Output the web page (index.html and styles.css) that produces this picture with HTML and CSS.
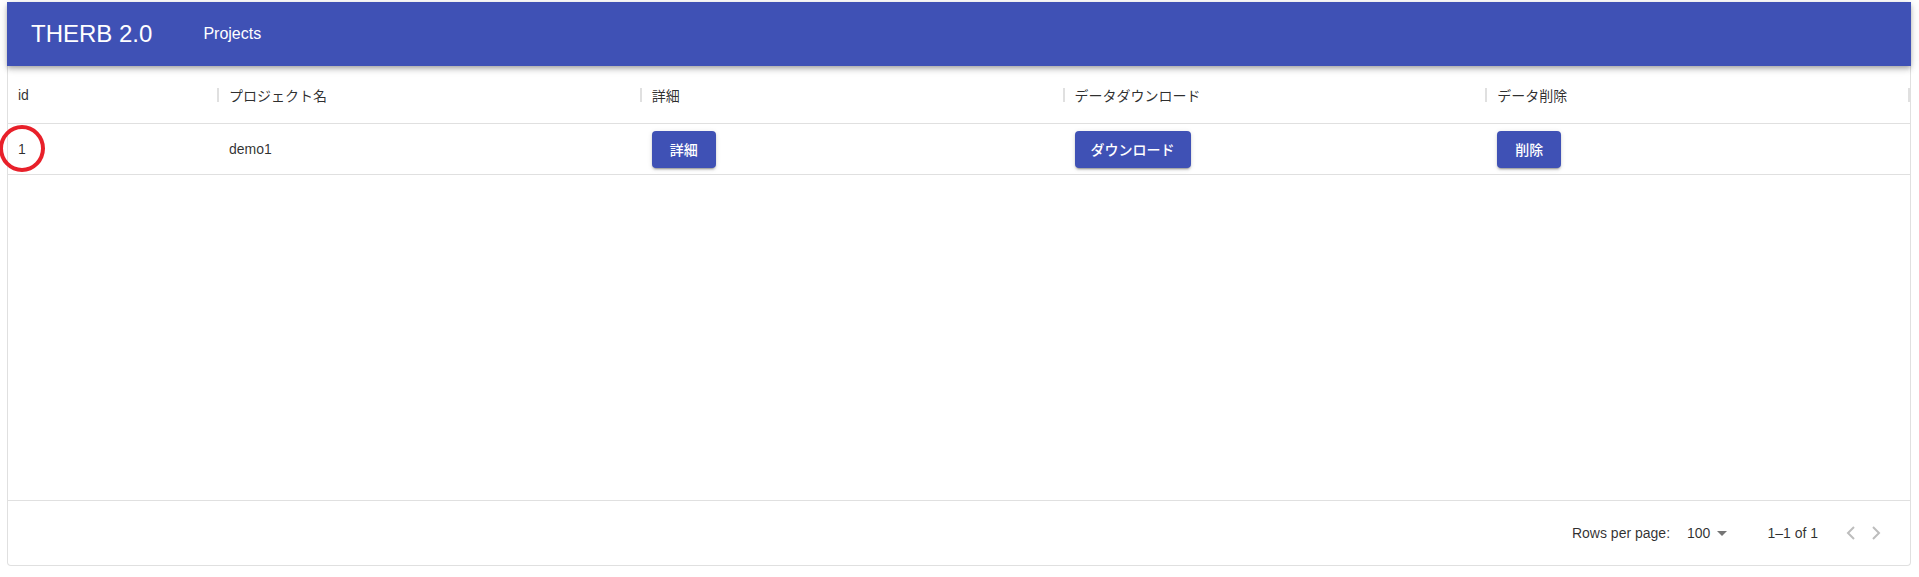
FILE: index.html
```html
<!DOCTYPE html>
<html lang="ja">
<head>
<meta charset="utf-8">
<title>THERB 2.0</title>
<link rel="stylesheet" href="styles.css">
</head>
<body>
<div class="page">
  <header class="appbar">
    <div class="brand">THERB 2.0</div>
    <nav class="nav"><span class="nav-link">Projects</span></nav>
  </header>
  <section class="grid">
    <div class="grid-head">
      <div class="hcell"><span class="htext">id</span><span class="sep"></span></div>
      <div class="hcell"><span class="htext">プロジェクト名</span><span class="sep"></span></div>
      <div class="hcell"><span class="htext">詳細</span><span class="sep"></span></div>
      <div class="hcell"><span class="htext">データダウンロード</span><span class="sep"></span></div>
      <div class="hcell"><span class="htext">データ削除</span><span class="sep"></span></div>
    </div>
    <div class="grid-body">
      <div class="row">
        <div class="cell">1</div>
        <div class="cell">demo1</div>
        <div class="cell"><button class="btn">詳細</button></div>
        <div class="cell"><button class="btn">ダウンロード</button></div>
        <div class="cell"><button class="btn">削除</button></div>
      </div>
    </div>
    <footer class="grid-foot">
      <span class="ftext">Rows per page:</span>
      <span class="select">100</span>
      <svg class="caret" width="10" height="5" viewBox="0 0 10 5"><path d="M0 0h10L5 5z" fill="#757575"/></svg>
      <span class="ftext range">1–1 of 1</span>
      <svg class="chev" width="10" height="16" viewBox="0 0 10 16"><polyline points="8,2 2,8 8,14" fill="none" stroke="#bdbdbd" stroke-width="2"/></svg>
      <svg class="chev chev-r" width="10" height="16" viewBox="0 0 10 16"><polyline points="2,2 8,8 2,14" fill="none" stroke="#bdbdbd" stroke-width="2"/></svg>
    </footer>
  </section>
  <div class="mark"></div>
</div>
</body>
</html>
```

FILE: styles.css
```css
* { box-sizing: border-box; }
html, body { margin: 0; padding: 0; background: #fff; }
body {
  font-family: "Liberation Sans", Arial, "Noto Sans CJK JP", sans-serif;
  color: rgba(0,0,0,0.82);
}
.page {
  position: relative;
  padding: 2px 8px 0 7px;
}
.appbar {
  height: 64px;
  background: #3f51b5;
  color: #fff;
  display: flex;
  align-items: center;
  padding-left: 24px;
  box-shadow: 0 2px 4px -1px rgba(0,0,0,0.2), 0 4px 5px 0 rgba(0,0,0,0.14), 0 1px 10px 0 rgba(0,0,0,0.12);
  position: relative;
  z-index: 1;
}
.brand {
  font-size: 24px;
  line-height: 1;
}
.nav { margin-left: 51px; }
.nav-link { font-size: 16px; }

.grid {
  border: 1px solid #e0e0e0;
  border-top: none;
  border-radius: 0 0 4px 4px;
  height: 500px;
  display: flex;
  flex-direction: column;
  font-size: 14px;
}
.grid-head, .row {
  display: grid;
  grid-template-columns: 211px repeat(4, 1fr);
}
.grid-head {
  height: 58px;
  border-bottom: 1px solid #e0e0e0;
}
.hcell {
  display: flex;
  align-items: center;
  padding-left: 10px;
}
.htext { padding-top: 1px; }
.sep {
  margin-left: auto;
  width: 2px;
  height: 14px;
  background: #e0e0e0;
}
.grid-body { flex: 1; }
.row {
  height: 51px;
  border-bottom: 1px solid #e0e0e0;
}
.cell {
  display: flex;
  align-items: center;
  padding-left: 10px;
}
.btn {
  font-family: "Liberation Sans", "Noto Sans CJK JP", sans-serif;
  font-size: 14px;
  font-weight: 500;
  color: #fff;
  background: #3f51b5;
  border: none;
  border-radius: 4px;
  height: 37px;
  padding: 0 16px;
  min-width: 64px;
  box-shadow: 0 3px 1px -2px rgba(0,0,0,0.2), 0 2px 2px 0 rgba(0,0,0,0.14), 0 1px 5px 0 rgba(0,0,0,0.12);
}
.grid-foot {
  height: 65px;
  border-top: 1px solid #e0e0e0;
  display: flex;
  align-items: center;
  justify-content: flex-end;
  padding-right: 29px;
}
.select { margin-left: 17px; }
.caret { margin-left: 7px; margin-top: 1px; }
.range { margin-left: 40px; }
.chev { margin-left: 28px; }
.chev-r { margin-left: 15px; }

.mark {
  position: absolute;
  left: -1px;
  top: 125px;
  width: 46px;
  height: 47px;
  border: 4px solid #e8202a;
  border-radius: 50%;
}
```
